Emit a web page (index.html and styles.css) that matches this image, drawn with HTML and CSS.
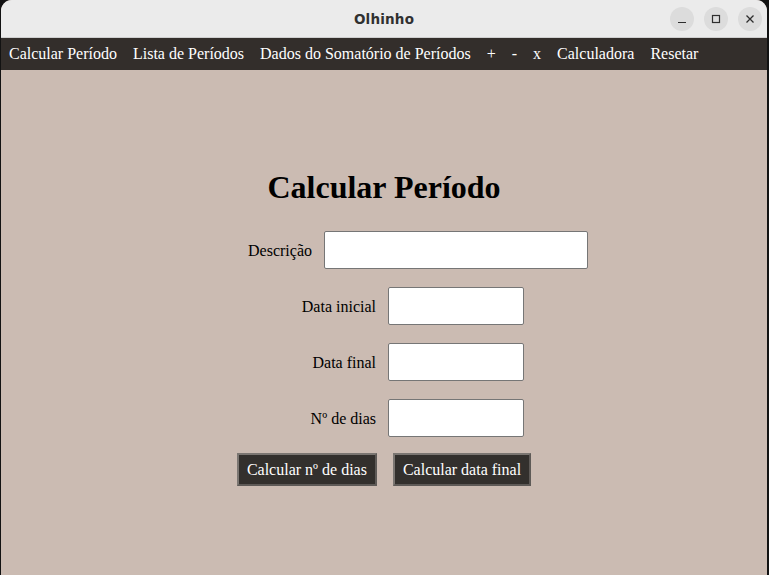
FILE: index.html
```html
<!DOCTYPE html>
<html lang="pt">
<head>
<meta charset="utf-8">
<title>Olhinho</title>
<link rel="stylesheet" href="styles.css">
</head>
<body>
<div class="window">
  <header class="titlebar">
    <span class="title">Olhinho</span>
    <div class="controls">
      <span class="ctl"><svg width="24" height="24" viewBox="0 0 24 24"><line x1="8" y1="15.5" x2="16" y2="15.5" stroke="#2e2e2e" stroke-width="1.2"/></svg></span>
      <span class="ctl"><svg width="24" height="24" viewBox="0 0 24 24"><rect x="8.5" y="8.5" width="7" height="7" fill="none" stroke="#2e2e2e" stroke-width="1.2"/></svg></span>
      <span class="ctl"><svg width="24" height="24" viewBox="0 0 24 24"><path d="M8.5 8.5 L15.5 15.5 M15.5 8.5 L8.5 15.5" stroke="#2e2e2e" stroke-width="1.3"/></svg></span>
    </div>
  </header>
  <nav class="menu">
    <a class="item">Calcular Período</a>
    <a class="item">Lista de Períodos</a>
    <a class="item">Dados do Somatório de Períodos</a>
    <a class="item">+</a>
    <a class="item">-</a>
    <a class="item">x</a>
    <a class="item">Calculadora</a>
    <a class="item">Resetar</a>
  </nav>
  <main class="content">
    <h1 class="heading">Calcular Período</h1>
    <form class="form">
      <div class="row"><label class="label">Descrição</label><input class="field wide" type="text"></div>
      <div class="row"><label class="label">Data inicial</label><input class="field" type="text"></div>
      <div class="row"><label class="label">Data final</label><input class="field" type="text"></div>
      <div class="row"><label class="label">Nº de dias</label><input class="field" type="text"></div>
      <div class="buttons">
        <button type="button" class="btn">Calcular nº de dias</button>
        <button type="button" class="btn">Calcular data final</button>
      </div>
    </form>
  </main>
</div>
</body>
</html>
```
FILE: styles.css
```css
* { box-sizing: border-box; }
html, body { margin: 0; height: 100%; }
body {
  background: #121212;
  padding: 0 2px 0 1px;
  font-family: "Liberation Serif", "Times New Roman", serif;
  overflow: hidden;
}
.window {
  height: 100%;
  display: flex;
  flex-direction: column;
  border-radius: 11px 11px 0 0;
  overflow: hidden;
  background: #cbbbb2;
}
.titlebar {
  height: 38px;
  flex: none;
  background: #ebebeb;
  border-bottom: 1px solid #cfcfcf;
  display: flex;
  align-items: center;
  justify-content: center;
  position: relative;
}
.title {
  font-family: "DejaVu Sans", sans-serif;
  font-weight: bold;
  font-size: 13.5px;
  color: #303030;
  letter-spacing: 0.2px;
}
.controls {
  position: absolute;
  right: 5px;
  top: 7px;
  display: flex;
  gap: 10px;
}
.ctl {
  width: 24px;
  height: 24px;
  border-radius: 50%;
  background: #dcdcdc;
  display: block;
}
.ctl svg { display: block; }
.menu {
  height: 32px;
  flex: none;
  background: #332e2b;
  display: flex;
  align-items: center;
}
.item {
  color: #ffffff;
  font-size: 16px;
  padding: 0 8px;
  white-space: nowrap;
}
.content {
  flex: 1;
  padding-top: 99px;
  display: flex;
  flex-direction: column;
  align-items: center;
}
.heading {
  margin: 0;
  font-size: 32px;
  font-weight: bold;
  color: #000;
  line-height: 37px;
}
.form {
  margin-top: 25px;
  display: flex;
  flex-direction: column;
  align-items: center;
  gap: 18px;
}
.row {
  display: flex;
  align-items: center;
  gap: 12px;
}
.label {
  width: 132px;
  text-align: right;
  font-size: 16px;
  color: #000;
  padding-top: 2px;
}
.field {
  width: 136px;
  height: 38px;
  border: 1px solid #767676;
  border-radius: 2px;
  background: #fff;
  margin: 0;
}
.field.wide { width: 264px; }
.buttons {
  display: flex;
  gap: 16px;
  margin-top: -2px;
}
.btn {
  height: 33px;
  padding: 0 8px;
  background: #33302d;
  color: #fff;
  font-family: "Liberation Serif", "Times New Roman", serif;
  font-size: 16px;
  border: 2px solid;
  border-color: #7b7672 #5e5a57 #5e5a57 #7b7672;
  margin: 0;
}
```
